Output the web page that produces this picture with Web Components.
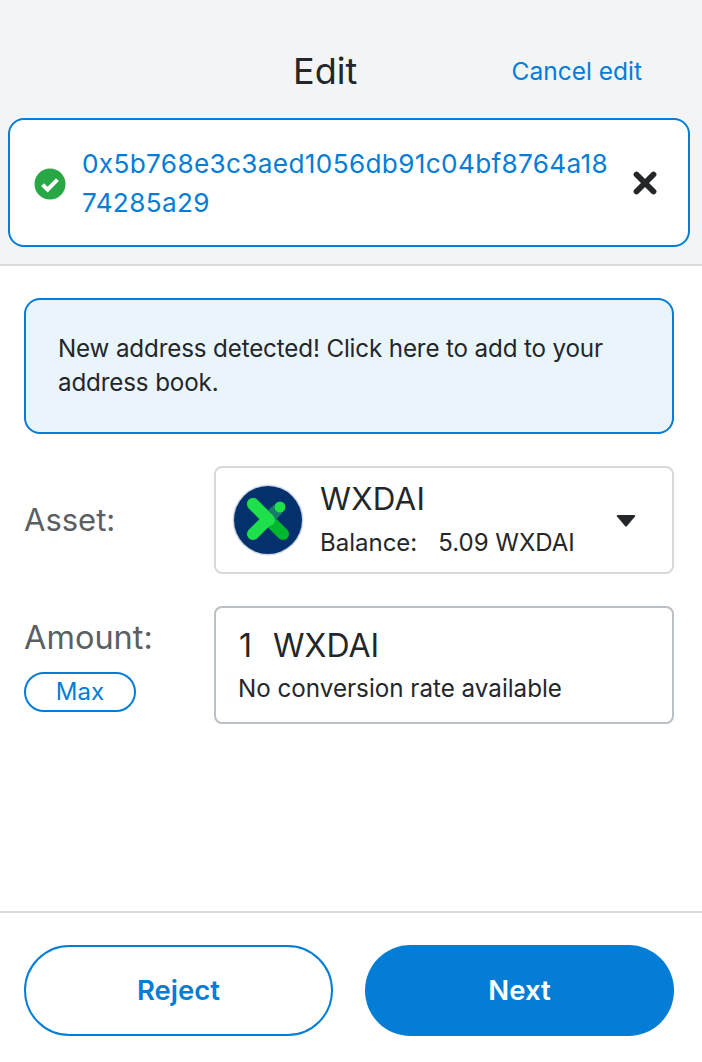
<!DOCTYPE html>
<html><head><meta charset="utf-8">
<style>
html,body{margin:0;padding:0;background:#fff;}
body{font-family:Inter,"Liberation Sans",sans-serif;color:#24272a;width:702px;height:1062px;overflow:hidden;}
</style></head><body>
<send-screen>
  <send-header slot="header">
    <span slot="title">Edit</span><span slot="cancel">Cancel edit</span>
    <address-box slot="address">0x5b768e3c3aed1056db91c04bf8764a1874285a29</address-box>
  </send-header>
  <notice-box>New address detected! Click here to add to your address book.</notice-box>
  <form-row>
    <span slot="label">Asset:</span>
    <asset-select></asset-select>
  </form-row>
  <form-row variant="amount">
    <span slot="label">Amount:</span>
    <max-pill slot="extra">Max</max-pill>
    <amount-box></amount-box>
  </form-row>
  <send-footer></send-footer>
</send-screen>
<script>
function def(name, html){
  customElements.define(name, class extends HTMLElement{
    constructor(){super();this.attachShadow({mode:'open'}).innerHTML=html;}
  });
}
def('send-screen',`<style>:host{display:flex;flex-direction:column;height:1062px;}
main{flex:1;display:flex;flex-direction:column;padding:32px 28px 0 24px;gap:32px;}
</style><slot name="header"></slot><main><slot></slot></main>`);
def('send-header',`<style>:host{display:block;background:#f2f4f6;border-bottom:2px solid #d9dbdd;height:264px;box-sizing:content-box;}
.top{height:118px;display:flex;align-items:center;justify-content:space-between;padding:24px 60px 0 293px;box-sizing:border-box;}
.title{font-size:36px;line-height:40px;font-weight:400;color:#24272a;}
.cancel{font-size:24.5px;color:#037dd6;white-space:nowrap;}
.addr{padding:0 12px 0 8px;}
</style><div class="top"><div class="title"><slot name="title"></slot></div><div class="cancel"><slot name="cancel"></slot></div></div><div class="addr"><slot name="address"></slot></div>`);
def('address-box',`<style>:host{display:flex;align-items:center;height:129px;box-sizing:border-box;background:#fff;border:2px solid #037dd6;border-radius:16px;padding:0 31px 0 24px;}
svg{flex:none;display:block;}
.t{flex:none;margin-left:16px;font-size:26.2px;line-height:39px;color:#037dd6;width:532px;word-break:break-all;letter-spacing:.33px;}
</style><svg width="32" height="32" viewBox="0 0 32 32" style="margin-top:2px"><circle cx="16" cy="16" r="15.5" fill="#28a745"/><path d="M8.6 16.6l5 5 9.8-10" fill="none" stroke="#fff" stroke-width="4"/></svg><div class="t"><slot></slot></div><svg width="24" height="24" viewBox="0 0 24 24" style="margin-left:auto"><path d="M3.5 3.5L20.5 20.5M20.5 3.5L3.5 20.5" fill="none" stroke="#24272a" stroke-width="5.8" stroke-linecap="round"/></svg>`);
def('notice-box',`<style>:host{display:block;width:650px;height:136px;box-sizing:border-box;background:#eaf4fb;border:2px solid #037dd6;border-radius:16px;padding:32px 32px;font-size:24.2px;line-height:34px;color:#24272a;letter-spacing:-.15px;}
</style><slot></slot>`);
def('form-row',`<style>:host{display:grid;grid-template-columns:190px 460px;}
.l{font-size:31px;color:#5a5f64;line-height:36px;display:flex;flex-direction:column;align-items:flex-start;}
:host([variant=amount]) .l{padding-top:14px;gap:16px;font-size:32.5px}
:host(:not([variant])) .l{justify-content:center;}
</style><div class="l"><slot name="label"></slot><slot name="extra"></slot></div><div><slot></slot></div>`);
def('max-pill',`<style>:host{display:flex;align-items:center;justify-content:center;width:112px;height:40px;box-sizing:border-box;border:2px solid #037dd6;border-radius:20px;color:#037dd6;font-size:24px;line-height:1;}
</style><slot></slot>`);
def('asset-select',`<style>:host{display:flex;align-items:center;height:108px;box-sizing:border-box;border:2px solid #d6d9dc;border-radius:8px;padding:0 36px 0 16px;}
svg{display:block;flex:none}
.i{flex:1;margin-left:16px;}
.n{font-size:31.4px;line-height:38px;color:#24272a;margin-top:-1px;letter-spacing:.2px}
.b{font-size:24px;line-height:34px;margin-top:8px;color:#24272a;display:flex;gap:21px;white-space:nowrap;letter-spacing:0}
</style><svg width="72" height="72" viewBox="0 0 72 72"><circle cx="36" cy="36" r="35.5" fill="#cfd8e8"/><circle cx="36" cy="36" r="34" fill="#03316b"/><path d="M21 20L51 50" stroke="#00b82e" stroke-width="12" stroke-linecap="round"/><path d="M21 50L36 35" stroke="#1ee04a" stroke-width="12" stroke-linecap="round"/><path d="M36 35L46 25" stroke="#1a7a6a" stroke-width="12"/><path d="M21 20L37 36" stroke="#1ee04a" stroke-width="12" stroke-linecap="round"/><circle cx="48" cy="23" r="5.5" fill="#1ee04a"/></svg><div class="i"><div class="n">WXDAI</div><div class="b"><span>Balance:</span><span>5.09 WXDAI</span></div></div><svg width="20" height="12" viewBox="0 0 20 12" style="margin-top:2px"><path d="M1 1.5Q0 0 2 0H18Q20 0 19 1.5L11 11Q10 12 9 11Z" fill="#24272a"/></svg>`);
def('amount-box',`<style>:host{display:block;height:118px;box-sizing:border-box;border:2px solid #bbc0c5;border-radius:8px;padding:19px 22px;}
.v{font-size:32px;line-height:38px;color:#24272a;display:flex;gap:21px;margin-left:1px}
.c{font-size:24.2px;line-height:34px;margin-top:7px;color:#24272a;white-space:nowrap;}
</style><div class="v"><span>1</span><span>WXDAI</span></div><div class="c">No conversion rate available</div>`);
def('send-footer',`<style>:host{display:flex;position:absolute;left:0;right:0;top:911px;height:151px;box-sizing:border-box;border-top:2px solid #d9dbdd;padding:32px 28px 0 24px;gap:32px;background:#fff}
.b{flex:none;width:309px;height:91px;box-sizing:border-box;border-radius:46px;display:flex;align-items:center;justify-content:center;font-size:27.5px;font-weight:600;padding-bottom:1px}
.r{border:2px solid #037dd6;color:#037dd6;background:#fff}
.n{background:#037dd6;color:#fff}
</style><div class="b r">Reject</div><div class="b n">Next</div>`);
</script>
</body></html>
